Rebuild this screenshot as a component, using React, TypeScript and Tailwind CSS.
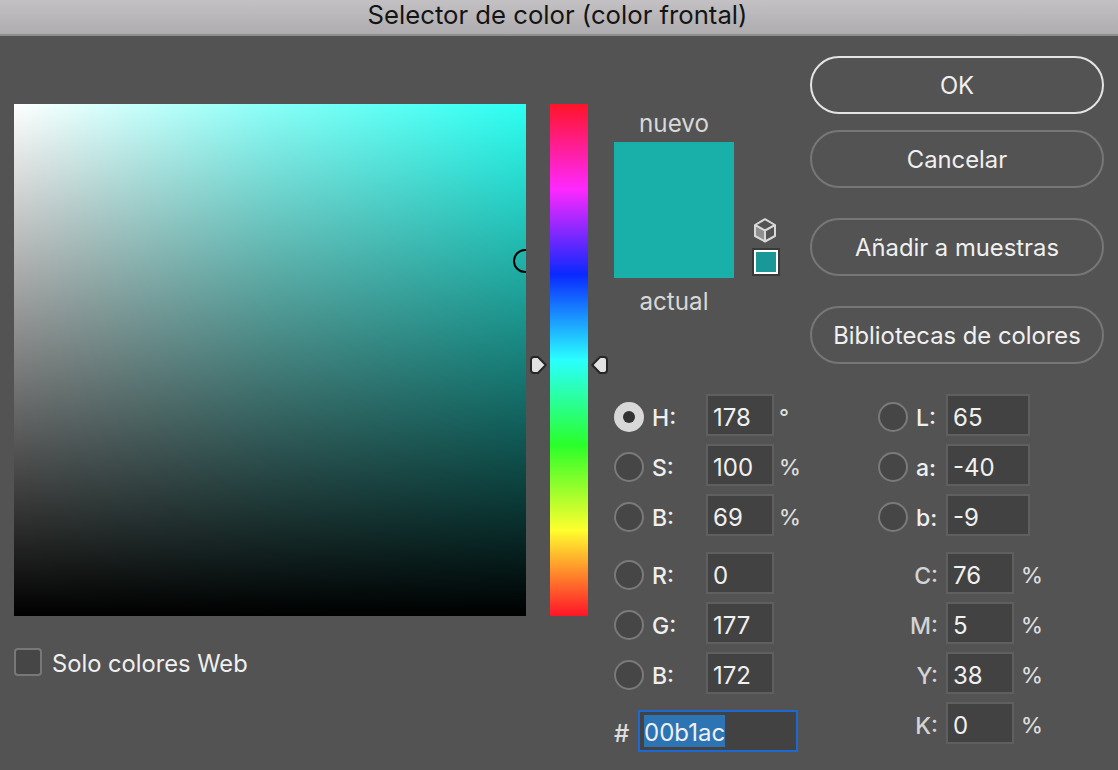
import React from 'react';

const font = 'font-["Inter","Liberation_Sans",sans-serif]';

function Radio({ checked = false }: { checked?: boolean }) {
  if (checked) {
    return (
      <div className="w-[30px] h-[30px] mt-[4px] rounded-full bg-[#d8d8d8] flex items-center justify-center shrink-0">
        <div className="w-[12px] h-[12px] rounded-full bg-[#333333]" />
      </div>
    );
  }
  return <div className="w-[30px] h-[30px] mt-[4px] rounded-full border-2 border-[#7a7a7a] bg-[#464646] shrink-0" />;
}

function Field({ value, width = 'w-[68px]' }: { value: string; width?: string }) {
  return (
    <div className={`${width} h-[42px] border-2 border-[#5f5f5f] bg-[#424242] pl-[5px] pt-[6px] flex items-center text-[24px] text-[#f0f0f0] shrink-0`}>
      {value}
    </div>
  );
}

function HsbRow({ label, value, unit, checked, className = '' }: { label: string; value: string; unit?: string; checked?: boolean; className?: string }) {
  return (
    <div className={`flex items-center h-[42px] ${className}`}>
      <Radio checked={checked} />
      <span className="w-[62px] pl-[8px] pt-[6px] text-[23px] font-medium text-[#efefef]">{label}</span>
      <Field value={value} />
      {unit && <span className="pl-[5px] pt-[5px] text-[22px] font-medium text-[#dedede]">{unit}</span>}
    </div>
  );
}

function LabRow({ label, value }: { label: string; value: string }) {
  return (
    <div className="flex items-center h-[42px]">
      <Radio />
      <span className="w-[38px] pl-[8px] pt-[6px] text-[23px] font-medium text-[#efefef]">{label}</span>
      <Field value={value} width="w-[84px]" />
    </div>
  );
}

function CmykRow({ label, value }: { label: string; value: string }) {
  return (
    <div className="flex items-center h-[42px]">
      <span className="w-[60px] pr-[8px] pt-[6px] text-right text-[23px] font-medium text-[#d4d4d4]">{label}</span>
      <Field value={value} />
      <span className="pl-[7px] pt-[5px] text-[22px] font-medium text-[#dedede]">%</span>
    </div>
  );
}

function PillButton({ label, primary = false, className = '' }: { label: string; primary?: boolean; className?: string }) {
  return (
    <div className={`w-[294px] h-[58px] rounded-full border-2 flex items-center justify-center pt-[2px] text-[23.8px] text-[#f0f0f0] ${primary ? 'border-[#e4e4e4]' : 'border-[#777777]'} ${className}`}>
      {label}
    </div>
  );
}

function HueArrow({ flip = false }: { flip?: boolean }) {
  return (
    <svg width="18" height="18" viewBox="0 0 18 18" className={`block ${flip ? '-scale-x-100' : ''}`}>
      <path
        d="M4 1 L8 1 L15.8 9 L8 17 L4 17 Q1 17 1 14 L1 4 Q1 1 4 1 Z"
        fill="#e2e2e2"
        stroke="#262626"
        strokeWidth="2"
        strokeLinejoin="round"
      />
    </svg>
  );
}

function CubeIcon() {
  return (
    <svg width="22" height="25" viewBox="0 0 22 25" className="block">
      <path d="M11 12.5 L11 23.5 L1 18 L1 7 Z" fill="#8f8f8f" />
      <path d="M11 1.2 L21 7 L21 18 L11 23.5 L1 18 L1 7 Z M1 7 L11 12.5 L21 7 M11 12.5 L11 23.5" fill="none" stroke="#d8d8d8" strokeWidth="2" strokeLinejoin="round" />
    </svg>
  );
}

export default function App() {
  return (
    <div className={`w-[1118px] h-[770px] overflow-hidden bg-[#535353] ${font}`}>
      <div className="h-[36px] pb-[3px] pr-[3px] border-b-2 border-[#8f8d8f] bg-gradient-to-b from-[#c4c1c4] to-[#aeacae] flex items-center justify-center text-[25.7px] text-[#141414]">
        Selector de color (color frontal)
      </div>

      <div className="flex">
        {/* campo de color + casilla */}
        <div className="w-[550px] pl-[14px] pt-[68px] shrink-0">
          <div className="relative w-[512px] h-[512px] overflow-hidden bg-[#2cfff2]">
            <div className="absolute inset-0 bg-[linear-gradient(to_right,#ffffff,rgba(255,255,255,0.44)_50%,rgba(255,255,255,0))]" />
            <div className="absolute inset-0 bg-gradient-to-b from-black/0 to-black" />
            <div className="absolute left-[499px] top-[145px] w-[24px] h-[24px] rounded-full border-2 border-black" />
          </div>
          <div className="flex items-center mt-[32px] h-[28px]">
            <div className="w-[28px] h-[28px] rounded-[4px] border-2 border-[#787878] bg-[#464646]" />
            <span className="pl-[10px] pt-[4px] text-[23.7px] text-[#f0f0f0]">Solo colores Web</span>
          </div>
        </div>

        {/* barra de tono */}
        <div className="w-[64px] pt-[68px] shrink-0">
          <div className="relative w-[38px] h-[512px] bg-[linear-gradient(to_bottom,#ff1428_0%,#ff28ff_16.6%,#0a28ff_33.3%,#2affff_50%,#2aff2a_66.6%,#fffe2e_83.3%,#ff1428_100%)]">
            <div className="absolute left-[-20px] top-[252px]"><HueArrow /></div>
            <div className="absolute left-[40px] top-[252px]"><HueArrow flip /></div>
          </div>
        </div>

        <div className="flex-1">
          <div className="flex h-[358px]">
            {/* muestras nuevo / actual */}
            <div className="w-[196px] pt-[72px] shrink-0">
              <div className="w-[120px] h-[34px] text-center text-[24.2px] leading-[32px] text-[#d8d8d8]">nuevo</div>
              <div className="flex items-end">
                <div className="w-[120px] h-[136px] bg-[#1ab0aa]" />
                <div className="pl-[19px] pb-[2px] flex flex-col items-start">
                  <div className="ml-[1px]"><CubeIcon /></div>
                  <div className="mt-[5px] -ml-[1px] w-[28px] h-[28px] border-2 border-[#3a3a3a] bg-white p-[2px]">
                    <div className="w-full h-full bg-[#189896]" />
                  </div>
                </div>
              </div>
              <div className="w-[120px] text-center text-[24.2px] leading-[32px] pt-[8px] text-[#d8d8d8]">actual</div>
            </div>
            {/* botones */}
            <div className="pt-[20px]">
              <PillButton label="OK" primary />
              <PillButton label="Cancelar" className="mt-[16px]" />
              <PillButton label="Añadir a muestras" className="mt-[30px]" />
              <PillButton label="Bibliotecas de colores" className="mt-[30px]" />
            </div>
          </div>

          {/* valores */}
          <div className="flex">
            <div className="w-[264px] shrink-0">
              <HsbRow label="H:" value="178" unit="°" checked />
              <HsbRow label="S:" value="100" unit="%" className="mt-[8px]" />
              <HsbRow label="B:" value="69" unit="%" className="mt-[8px]" />
              <HsbRow label="R:" value="0" className="mt-[16px]" />
              <HsbRow label="G:" value="177" className="mt-[8px]" />
              <HsbRow label="B:" value="172" className="mt-[8px]" />
              <div className="flex items-center h-[42px] mt-[16px]">
                <span className="w-[24px] pt-[6px] text-[24px] font-medium text-[#dedede]">#</span>
                <div className="w-[160px] h-[42px] border-2 border-[#1c69d4] bg-[#424242] pl-[4px] flex items-center text-[24px] text-[#f0f0f0]">
                  <span className="inline-block h-[32px] bg-[#2d74b4] leading-[36px]">00b1ac</span>
                </div>
              </div>
            </div>
            <div>
              <div className="flex flex-col gap-[8px]">
                <LabRow label="L:" value="65" />
                <LabRow label="a:" value="-40" />
                <LabRow label="b:" value="-9" />
              </div>
              <div className="flex flex-col gap-[8px] mt-[16px] ml-[8px]">
                <CmykRow label="C:" value="76" />
                <CmykRow label="M:" value="5" />
                <CmykRow label="Y:" value="38" />
                <CmykRow label="K:" value="0" />
              </div>
            </div>
          </div>
        </div>
      </div>
    </div>
  );
}
